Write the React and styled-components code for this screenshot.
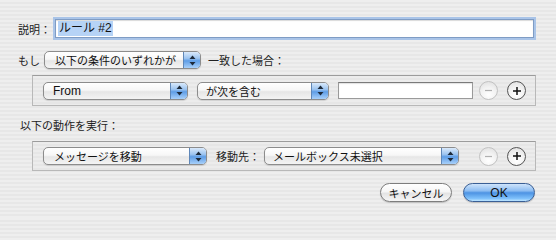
import React from 'react';
import styled, { createGlobalStyle } from 'styled-components';

const stripes = `repeating-linear-gradient(
    to bottom,
    #eeeeee 0px,
    #eeeeee 2px,
    #e7e7e7 2px,
    #e7e7e7 4px
  )`;

const GlobalStyle = createGlobalStyle`
  html, body {
    margin: 0;
    padding: 0;
    background: ${stripes};
  }
  body {
    font-family: "Liberation Sans", "Noto Sans CJK JP", sans-serif;
    font-size: 12px;
    color: #111;
  }
`;

const Dialog = styled.div`
  width: 556px;
  height: 218px;
  box-sizing: border-box;
  padding: 18px 20px 0 18px;
  display: flex;
  flex-direction: column;
  background: ${stripes};
  overflow: hidden;
`;

const Row = styled.div`
  display: flex;
  align-items: center;
  height: ${p => p.h || 18}px;
  margin-top: ${p => p.mt || 0}px;
  margin-left: ${p => p.ml || 0}px;
`;

const Label = styled.span`
  font-family: "Noto Sans CJK JP", sans-serif;
  font-size: 11px;
  color: #222;
  white-space: nowrap;
  margin-left: ${p => p.ml || 0}px;
  margin-right: ${p => p.mr || 0}px;
`;

const DescField = styled.div`
  flex: 1;
  height: 17px;
  margin-left: 4px;
  margin-right: 2px;
  background: #fff;
  border: 1px solid #7f9cc4;
  box-shadow: 0 0 0 2px #a9c4e8, inset 0 1px 1px rgba(0, 0, 0, 0.15);
  display: flex;
  align-items: center;
  padding-left: 2px;
`;

const Selected = styled.span`
  background: #b6d3f6;
  font-family: "Liberation Sans", "Noto Sans CJK JP", sans-serif;
  font-size: 12px;
  padding: 0 1px;
  line-height: 15px;
`;

const Box = styled.div`
  display: flex;
  align-items: center;
  height: ${p => p.h}px;
  box-sizing: border-box;
  margin-top: ${p => p.mt}px;
  margin-left: 14px;
  padding-left: 10px;
  border: 1px solid #b8b8b8;
  border-top-color: #9c9c9c;
  background: repeating-linear-gradient(
    to bottom,
    #ececec 0px,
    #ececec 2px,
    #e6e6e6 2px,
    #e6e6e6 4px
  );
`;

const PopupWrap = styled.div`
  width: ${p => p.w}px;
  height: 18px;
  box-sizing: border-box;
  margin-right: ${p => p.mr || 0}px;
  border: 1px solid #8c8c8c;
  border-radius: 5px;
  background: linear-gradient(to bottom, #ffffff 0%, #f7f7f7 45%, #e6e6e6 55%, #f4f4f4 100%);
  box-shadow: 0 1px 1px rgba(0, 0, 0, 0.12);
  display: flex;
  align-items: center;
  overflow: hidden;
  flex-shrink: 0;
`;

const PopupText = styled.span`
  flex: 1;
  padding-left: ${p => p.pl || 9}px;
  font-family: ${p => (p.latin ? '"Liberation Sans"' : '"Noto Sans CJK JP"')}, sans-serif;
  font-size: ${p => (p.latin ? 12 : 11)}px;
  line-height: 16px;
  white-space: nowrap;
  color: #111;
`;

const Cap = styled.span`
  width: 16px;
  height: 100%;
  border-left: 1px solid #5f87b8;
  background: linear-gradient(to bottom, #d9e9fb 0%, #9cc4f0 40%, #5e9de6 55%, #a8d0fa 100%);
  display: flex;
  align-items: center;
  justify-content: center;
`;

const TextInput = styled.div`
  width: 135px;
  height: 17px;
  box-sizing: border-box;
  margin-right: 6px;
  background: #fff;
  border: 1px solid #9a9a9a;
  border-top-color: #7a7a7a;
  box-shadow: inset 0 1px 1px rgba(0, 0, 0, 0.12);
  flex-shrink: 0;
`;

const Round = styled.div`
  width: 19px;
  height: 19px;
  box-sizing: border-box;
  border-radius: 50%;
  margin-left: ${p => p.ml || 0}px;
  border: 1px solid ${p => (p.disabled ? '#c2c2c2' : '#555')};
  background: radial-gradient(circle at 50% 75%, #ffffff 0%, #f2f2f2 50%, #dcdcdc 100%);
  display: flex;
  align-items: center;
  justify-content: center;
  flex-shrink: 0;
`;

const ButtonRow = styled.div`
  display: flex;
  justify-content: flex-end;
  gap: 11px;
  margin-top: 12px;
  margin-right: 1px;
`;

const PushButton = styled.div`
  width: 72px;
  height: 19px;
  box-sizing: border-box;
  border-radius: 10px;
  display: flex;
  align-items: center;
  justify-content: center;
  font-family: ${p => (p.primary ? '"Liberation Sans"' : '"Noto Sans CJK JP"')}, sans-serif;
  font-size: ${p => (p.primary ? 12 : 11)}px;
  color: #111;
  border: 1px solid ${p => (p.primary ? '#3a5f95' : '#7d7d7d')};
  background: ${p =>
    p.primary
      ? 'linear-gradient(to bottom, #cfe4fb 0%, #8dbdf2 40%, #4d93e3 52%, #7fc1fb 85%, #bfe6ff 100%)'
      : 'linear-gradient(to bottom, #ffffff 0%, #f6f6f6 45%, #e4e4e4 55%, #f6f6f6 100%)'};
  box-shadow: 0 1px 1px rgba(0, 0, 0, 0.18);
`;

const Arrows = () => (
  <svg width="7" height="11" viewBox="0 0 7 11">
    <path d="M3.5 0.5 L6.5 4 L0.5 4 Z" fill="#1d2a3a" />
    <path d="M3.5 10.5 L6.5 7 L0.5 7 Z" fill="#1d2a3a" />
  </svg>
);

const Popup = ({ w, mr, pl, latin, children }) => (
  <PopupWrap w={w} mr={mr}>
    <PopupText pl={pl} latin={latin}>{children}</PopupText>
    <Cap>
      <Arrows />
    </Cap>
  </PopupWrap>
);

const Minus = () => (
  <Round disabled>
    <svg width="9" height="9" viewBox="0 0 9 9">
      <path d="M1 4.5 H8" stroke="#b0b0b0" strokeWidth="1.2" />
    </svg>
  </Round>
);

const Plus = () => (
  <Round ml={9}>
    <svg width="10" height="10" viewBox="0 0 10 10">
      <path d="M1 5 H9 M5 1 V9" stroke="#111" strokeWidth="1.5" />
    </svg>
  </Round>
);

export default function App() {
  return (
    <>
      <GlobalStyle />
      <Dialog>
        <Row h={21}>
          <Label>説明：</Label>
          <DescField>
            <Selected>ルール #2</Selected>
          </DescField>
        </Row>

        <Row mt={12} h={18}>
          <Label mr={4}>もし</Label>
          <Popup w={157} mr={7} pl={10}>以下の条件のいずれかが</Popup>
          <Label>一致した場合：</Label>
        </Row>

        <Box h={31} mt={6}>
          <Popup w={145} mr={9} latin>From</Popup>
          <Popup w={132} mr={9} pl={8}>が次を含む</Popup>
          <TextInput />
          <Minus />
          <Plus />
        </Box>

        <Row mt={11} h={16} ml={2}>
          <Label>以下の動作を実行：</Label>
        </Row>

        <Box h={30} mt={8}>
          <Popup w={164} mr={9} pl={10}>メッセージを移動</Popup>
          <Label mr={4}>移動先：</Label>
          <Popup w={195} mr={20} pl={8}>メールボックス未選択</Popup>
          <Minus />
          <Plus />
        </Box>

        <ButtonRow>
          <PushButton>キャンセル</PushButton>
          <PushButton primary>OK</PushButton>
        </ButtonRow>
      </Dialog>
    </>
  );
}
